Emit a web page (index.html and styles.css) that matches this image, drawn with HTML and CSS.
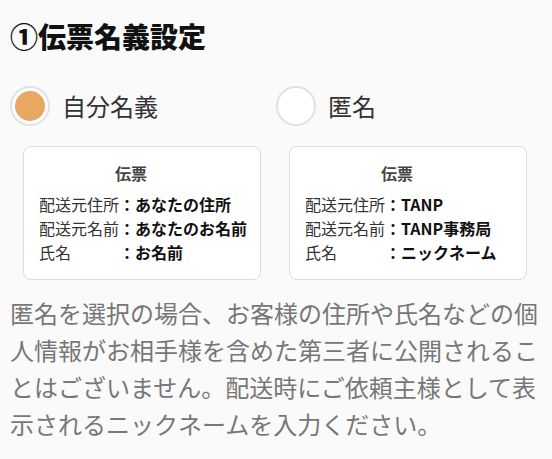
FILE: index.html
```html
<!DOCTYPE html>
<html lang="ja">
<head>
<meta charset="utf-8">
<link rel="stylesheet" href="styles.css">
</head>
<body>
<h1 class="title">①伝票名義設定</h1>
<div class="options">
  <div class="option">
    <label class="choice"><span class="radio checked"><span class="dot"></span></span><span class="choice-text">自分名義</span></label>
    <div class="card">
      <div class="card-title">伝票</div>
      <div class="row"><span class="label">配送元住所</span><b class="value">：あなたの住所</b></div>
      <div class="row"><span class="label">配送元名前</span><b class="value">：あなたのお名前</b></div>
      <div class="row"><span class="label">氏名</span><b class="value">：お名前</b></div>
    </div>
  </div>
  <div class="option">
    <label class="choice"><span class="radio"></span><span class="choice-text">匿名</span></label>
    <div class="card">
      <div class="card-title">伝票</div>
      <div class="row"><span class="label">配送元住所</span><b class="value">：TANP</b></div>
      <div class="row"><span class="label">配送元名前</span><b class="value">：TANP事務局</b></div>
      <div class="row"><span class="label">氏名</span><b class="value">：ニックネーム</b></div>
    </div>
  </div>
</div>
<p class="note">匿名を選択の場合、お客様の住所や氏名などの個人情報がお相手様を含めた第三者に公開されることはございません。配送時にご依頼主様として表示されるニックネームを入力ください。</p>
</body>
</html>
```
FILE: styles.css
```css
html, body {
  margin: 0;
  padding: 0;
  background: #fafafa;
}
body {
  padding: 0 10px;
  font-family: "Noto Sans CJK JP", "Noto Sans", sans-serif;
  color: #333;
}
.title {
  margin: 16px 0 0;
  font-size: 28px;
  line-height: 40px;
  font-weight: 900;
  color: #111;
}
.options {
  display: grid;
  grid-template-columns: 266px 266px;
  margin-top: 30px;
}
.choice {
  display: flex;
  align-items: center;
  height: 40px;
}
.radio {
  box-sizing: border-box;
  width: 40px;
  height: 40px;
  border: 2px solid #e2e2e2;
  border-radius: 50%;
  background: #fff;
  display: flex;
  align-items: center;
  justify-content: center;
  flex: none;
}
.dot {
  width: 30px;
  height: 30px;
  border-radius: 50%;
  background: #e8a862;
}
.choice-text {
  margin-left: 12px;
  font-size: 24px;
  line-height: 40px;
  color: #333;
}
.card {
  box-sizing: border-box;
  margin: 20px 15px 0 13px;
  height: 134px;
  background: #fff;
  border: 1px solid #dcdcdc;
  border-radius: 8px;
  padding: 14px 15px;
}
.card-title {
  margin-right: 22px;
  text-align: center;
  font-size: 16px;
  line-height: 24px;
  font-weight: 700;
  color: #444;
  margin-bottom: 7px;
}
.row {
  font-size: 16px;
  line-height: 24px;
  white-space: nowrap;
  color: #333;
}
.label {
  display: inline-block;
  width: 80px;
}
.value {
  font-weight: 700;
  color: #111;
}
.note {
  margin: 14px 0 0;
  width: 532px;
  font-size: 24px;
  line-height: 37px;
  color: #777;
}
```
